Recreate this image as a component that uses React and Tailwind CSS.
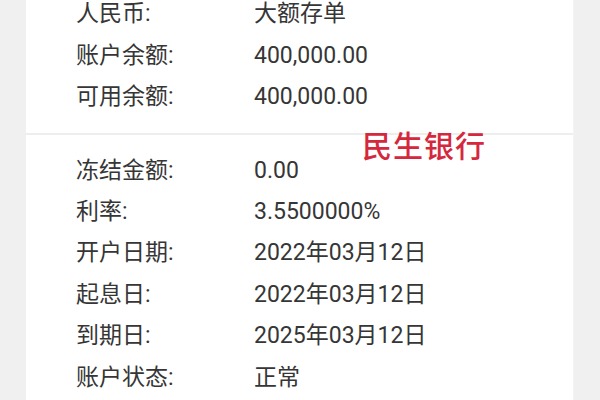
import React from "react";

const top = [
  ["人民币:", "大额存单"],
  ["账户余额:", "400,000.00"],
  ["可用余额:", "400,000.00"],
];
const bottom = [
  ["冻结金额:", "0.00"],
  ["利率:", "3.5500000%"],
  ["开户日期:", "2022年03月12日"],
  ["起息日:", "2022年03月12日"],
  ["到期日:", "2025年03月12日"],
  ["账户状态:", "正常"],
];

function Row({ label, value }) {
  return (
    <div className="flex items-center h-[41.4px] pl-[50px] text-[23px] text-[#363636]">
      <div className="w-[178px] shrink-0">{label}</div>
      <div>{value}</div>
    </div>
  );
}

export default function App() {
  return (
    <div
      className="w-[600px] h-[400px] bg-[#f0f0f0] flex px-[26px] overflow-hidden"
      style={{ fontFamily: 'Roboto, "Noto Sans CJK SC", sans-serif' }}
    >
      <div className="flex-1 bg-white relative border-r border-[#f4f4f4]">
        <div className="mt-[-6px] pb-[15px]">
          {top.map(([l, v]) => (
            <Row key={l} label={l} value={v} />
          ))}
        </div>
        <div className="h-[2px] bg-[#eeeeee]" />
        <div className="pt-[15px]">
          {bottom.map(([l, v]) => (
            <Row key={l} label={l} value={v} />
          ))}
        </div>
        <div className="absolute left-[336px] top-[132px] text-[30px] font-medium text-[#d5283d] leading-none tracking-[1px]">
          民生银行
        </div>
      </div>
    </div>
  );
}
